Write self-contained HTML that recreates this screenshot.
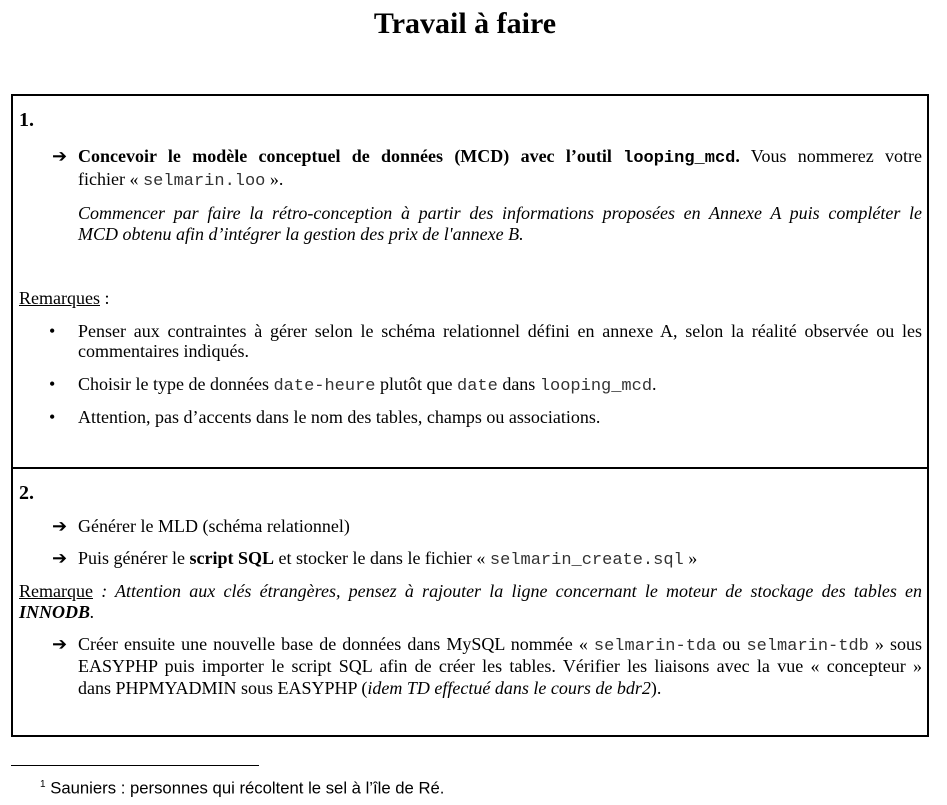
<!DOCTYPE html>
<html><head><meta charset="utf-8"><style>
body{margin:0;width:947px;height:805px;background:#fff;position:relative;font-family:"Liberation Serif",serif;font-size:18px;color:#000;overflow:hidden}
.l{position:absolute;line-height:20px;white-space:nowrap}
.j{text-align:justify;text-align-last:justify;white-space:normal}
.m{font-family:"Liberation Mono",monospace;font-size:17px;color:#333}
.box{position:absolute;border:2px solid #000}
i{font-style:italic}
</style></head><body>
<div class="l" style="top:6px;left:0;width:930px;text-align:center;font-size:30px;line-height:36px;font-weight:bold">Travail à faire</div>
<div class="box" style="left:11px;top:94px;width:914px;height:371px"></div>
<div class="box" style="left:11px;top:466px;width:914px;height:269px;border-top:none"></div>

<div class="l" style="top:110px;left:19px;font-weight:bold;font-size:20px">1.</div>
<div class="l" style="top:146px;left:52px">➔</div>
<div class="l j" style="top:146px;left:78px;width:844px"><b>Concevoir le modèle conceptuel de données (MCD) avec l’outil <span class="m" style="font-weight:bold;color:#000">looping_mcd</span>.</b> Vous nommerez votre</div>
<div class="l" style="top:169px;left:78px">fichier « <span class="m">selmarin.loo</span> ».</div>
<div class="l j" style="top:203px;left:78px;width:844px"><i>Commencer par faire la rétro-conception à partir des informations proposées en Annexe A puis compléter le</i></div>
<div class="l" style="top:224px;left:78px"><i>MCD obtenu afin d’intégrer la gestion des prix de l'annexe B.</i></div>
<div class="l" style="top:288px;left:19px"><u>Remarques</u> :</div>
<div class="l" style="top:321px;left:49px">•</div>
<div class="l j" style="top:321px;left:78px;width:844px">Penser aux contraintes à gérer selon le schéma relationnel défini en annexe A, selon la réalité observée ou les</div>
<div class="l" style="top:341px;left:78px">commentaires indiqués.</div>
<div class="l" style="top:374px;left:49px">•</div>
<div class="l" style="top:374px;left:78px">Choisir le type de données <span class="m">date-heure</span> plutôt que <span class="m">date</span> dans <span class="m">looping_mcd</span>.</div>
<div class="l" style="top:407px;left:49px">•</div>
<div class="l" style="top:407px;left:78px">Attention, pas d’accents dans le nom des tables, champs ou associations.</div>

<div class="l" style="top:483px;left:19px;font-weight:bold;font-size:20px">2.</div>
<div class="l" style="top:516px;left:52px">➔</div>
<div class="l" style="top:516px;left:78px">Générer le MLD (schéma relationnel)</div>
<div class="l" style="top:548px;left:52px">➔</div>
<div class="l" style="top:548px;left:78px">Puis générer le <b>script SQL</b> et stocker le dans le fichier « <span class="m">selmarin_create.sql</span> »</div>
<div class="l j" style="top:581px;left:19px;width:903px"><u>Remarque</u> <i>: Attention aux clés étrangères, pensez à rajouter la ligne concernant le moteur de stockage des tables en</i></div>
<div class="l" style="top:602px;left:19px"><i><b>INNODB</b>.</i></div>
<div class="l" style="top:634px;left:52px">➔</div>
<div class="l j" style="top:634px;left:78px;width:844px">Créer ensuite une nouvelle base de données dans MySQL nommée « <span class="m">selmarin-tda</span> ou <span class="m">selmarin-tdb</span> » sous</div>
<div class="l j" style="top:656px;left:78px;width:844px">EASYPHP puis importer le script SQL afin de créer les tables. Vérifier les liaisons avec la vue « concepteur »</div>
<div class="l" style="top:678px;left:78px">dans PHPMYADMIN sous EASYPHP (<i>idem TD effectué dans le cours de bdr2</i>).</div>

<div style="position:absolute;left:11px;top:765px;width:248px;height:1px;background:#000"></div>
<div class="l" style="top:775px;left:40px;font-family:'Liberation Sans',sans-serif;font-size:16.7px"><sup style="font-size:10px">1</sup> Sauniers : personnes qui récoltent le sel à l’île de Ré.</div>
</body></html>
